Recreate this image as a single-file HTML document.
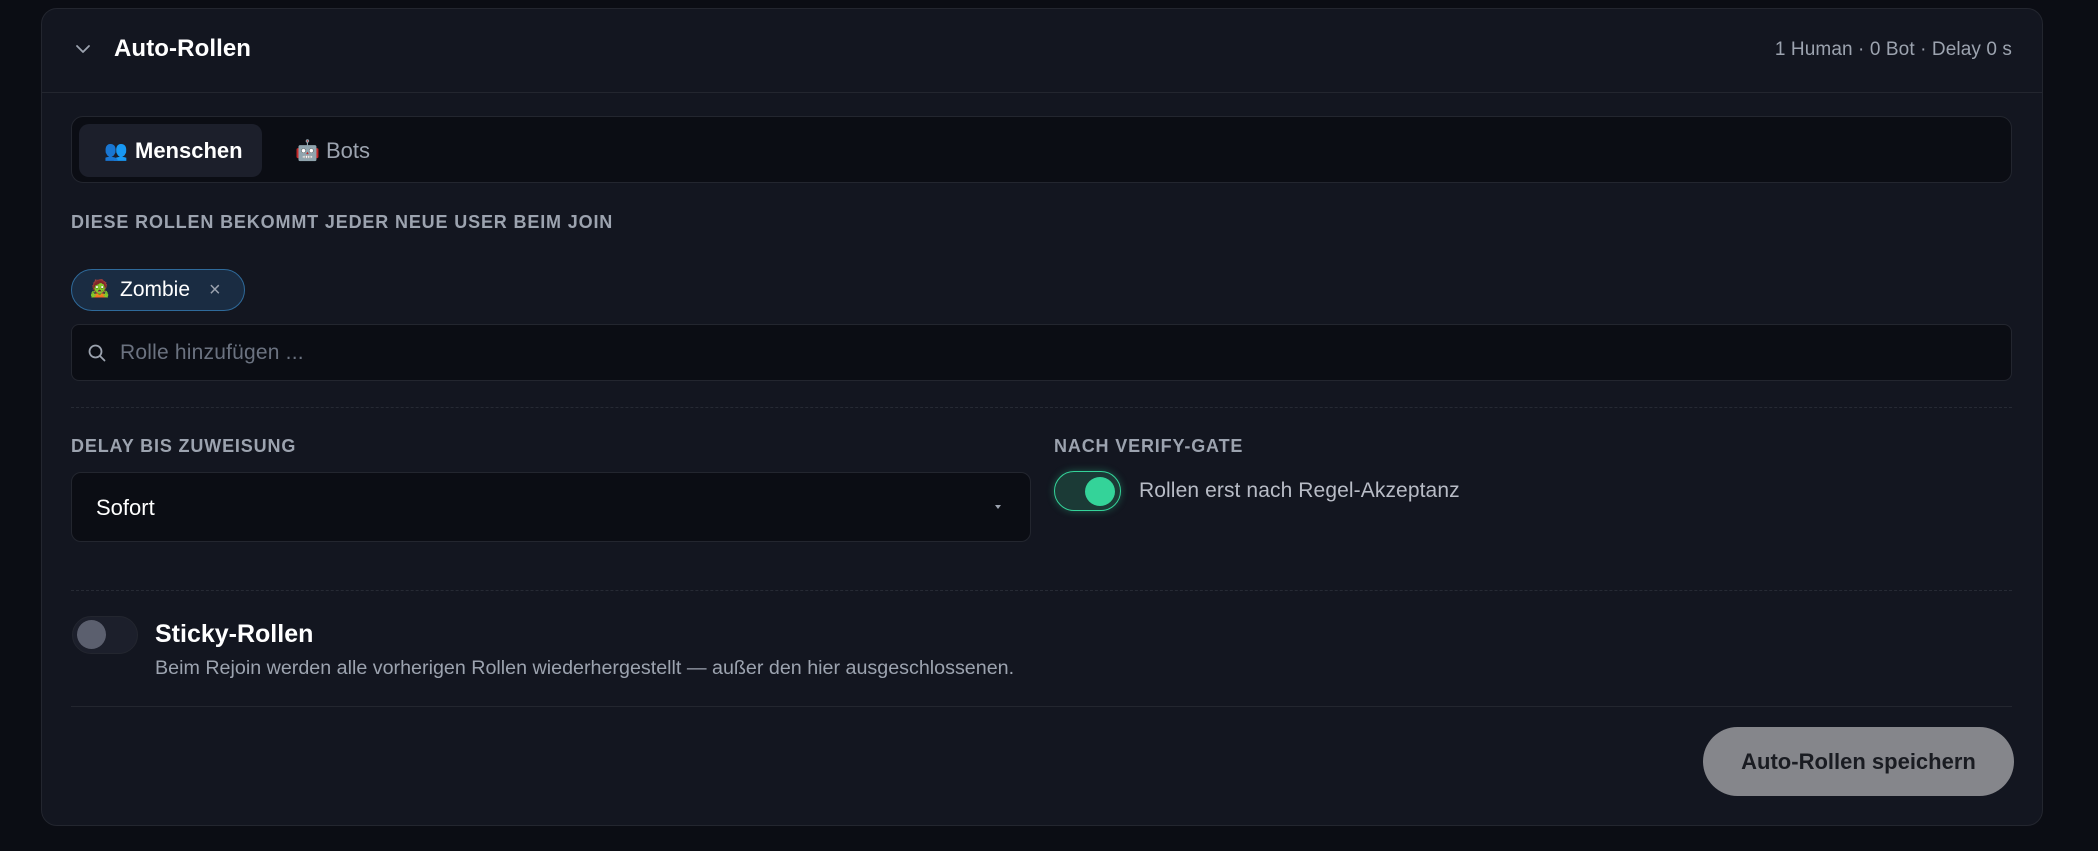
<!DOCTYPE html>
<html><head><meta charset="utf-8"><style>
*{box-sizing:border-box;margin:0;padding:0}
body{width:2098px;height:851px;background:#0b0d14;font-family:"Liberation Sans",sans-serif;position:relative;overflow:hidden;color:#e5e7eb}
.card{position:absolute;left:41px;top:8px;width:2002px;height:818px;background:#131620;border:1px solid #23262f;border-radius:16px}
.a{position:absolute}
.lbl{font-size:18px;font-weight:bold;letter-spacing:0.85px;color:#9ca3af}
</style></head><body>
<div class="card"></div>
<svg class="a" style="left:74px;top:40px" width="18" height="18" viewBox="0 0 18 18"><path d="M3 6l6 6 6-6" fill="none" stroke="#9ca3af" stroke-width="1.8" stroke-linecap="round" stroke-linejoin="round"/></svg>
<div class="a" style="left:114px;top:35px;font-size:24px;font-weight:bold;color:#fff;letter-spacing:0.1px">Auto-Rollen</div>
<div class="a" style="right:86px;top:39px;font-size:19px;color:#9ca3af;letter-spacing:0.1px">1 Human · 0 Bot · Delay 0 s</div>
<div class="a" style="left:42px;top:92px;width:2000px;height:1px;background:#23262f"></div>

<div class="a" style="left:71px;top:116px;width:1941px;height:67px;background:#0b0d14;border:1px solid #23262f;border-radius:12px"></div>
<div class="a" style="left:79px;top:124px;width:183px;height:53px;background:#1c1f2b;border-radius:10px"></div>
<div class="a" style="left:104px;top:139px;font-size:19px">👥</div>
<div class="a" style="left:135px;top:138px;font-size:22px;font-weight:bold;color:#fff">Menschen</div>
<div class="a" style="left:295px;top:138px;font-size:20px">🤖</div>
<div class="a" style="left:326px;top:138px;font-size:22px;color:#9ca3af">Bots</div>

<div class="a lbl" style="left:71px;top:212px">DIESE ROLLEN BEKOMMT JEDER NEUE USER BEIM JOIN</div>

<div class="a" style="left:71px;top:269px;width:174px;height:42px;background:#1a2c42;border:1.5px solid #2f6a9a;border-radius:21px"></div>
<div class="a" style="left:89px;top:279px;font-size:17px">🧟</div>
<div class="a" style="left:120px;top:278px;font-size:21px;color:#fff">Zombie</div>
<div class="a" style="left:209px;top:279px;font-size:20px;color:#9ca3af">×</div>

<div class="a" style="left:71px;top:324px;width:1941px;height:57px;background:#0b0d14;border:1px solid #23262f;border-radius:8px"></div>
<svg class="a" style="left:87px;top:343px" width="20" height="20" viewBox="0 0 20 20"><circle cx="8.5" cy="8.5" r="6" fill="none" stroke="#9ca3af" stroke-width="1.8"/><path d="M13 13l4.5 4.5" stroke="#9ca3af" stroke-width="1.8" stroke-linecap="round"/></svg>
<div class="a" style="left:120px;top:341px;font-size:21px;color:#6b7280;letter-spacing:0.2px">Rolle hinzufügen ...</div>

<div class="a" style="left:71px;top:407px;width:1941px;border-top:1px dashed #262a34"></div>

<div class="a lbl" style="left:71px;top:436px">DELAY BIS ZUWEISUNG</div>
<div class="a lbl" style="left:1054px;top:436px">NACH VERIFY-GATE</div>
<div class="a" style="left:71px;top:472px;width:960px;height:70px;background:#0b0d14;border:1px solid #23262f;border-radius:10px"></div>
<div class="a" style="left:96px;top:495px;font-size:22px;color:#fff">Sofort</div>
<div class="a" style="left:995px;top:505px;width:0;height:0;border-left:3px solid transparent;border-right:3px solid transparent;border-top:4px solid #9ca3af"></div>

<div class="a" style="left:1054px;top:471px;width:67px;height:40px;background:#1b3a36;border:1.5px solid #34d399;border-radius:20px;box-shadow:0 0 8px rgba(52,211,153,0.35)"></div>
<div class="a" style="left:1085px;top:477px;width:30px;height:29px;background:#34d399;border-radius:50%"></div>
<div class="a" style="left:1139px;top:479px;font-size:21px;color:#b8bcc6;letter-spacing:0.1px">Rollen erst nach Regel-Akzeptanz</div>

<div class="a" style="left:71px;top:590px;width:1941px;border-top:1px dashed #262a34"></div>

<div class="a" style="left:72px;top:616px;width:66px;height:38px;background:#1c1f2b;border:1px solid #23262f;border-radius:19px"></div>
<div class="a" style="left:77px;top:620px;width:29px;height:29px;background:#5b5f6e;border-radius:50%"></div>
<div class="a" style="left:155px;top:620px;font-size:25px;font-weight:bold;color:#fff">Sticky-Rollen</div>
<div class="a" style="left:155px;top:657px;font-size:19.7px;color:#9ca3af">Beim Rejoin werden alle vorherigen Rollen wiederhergestellt — außer den hier ausgeschlossenen.</div>

<div class="a" style="left:71px;top:706px;width:1941px;height:1px;background:#23262f"></div>
<div class="a" style="left:1703px;top:727px;width:311px;height:69px;background:#85868b;border-radius:35px;display:flex;align-items:center;justify-content:center;font-size:22px;font-weight:bold;color:#1a1c22">Auto-Rollen speichern</div>
</body></html>
